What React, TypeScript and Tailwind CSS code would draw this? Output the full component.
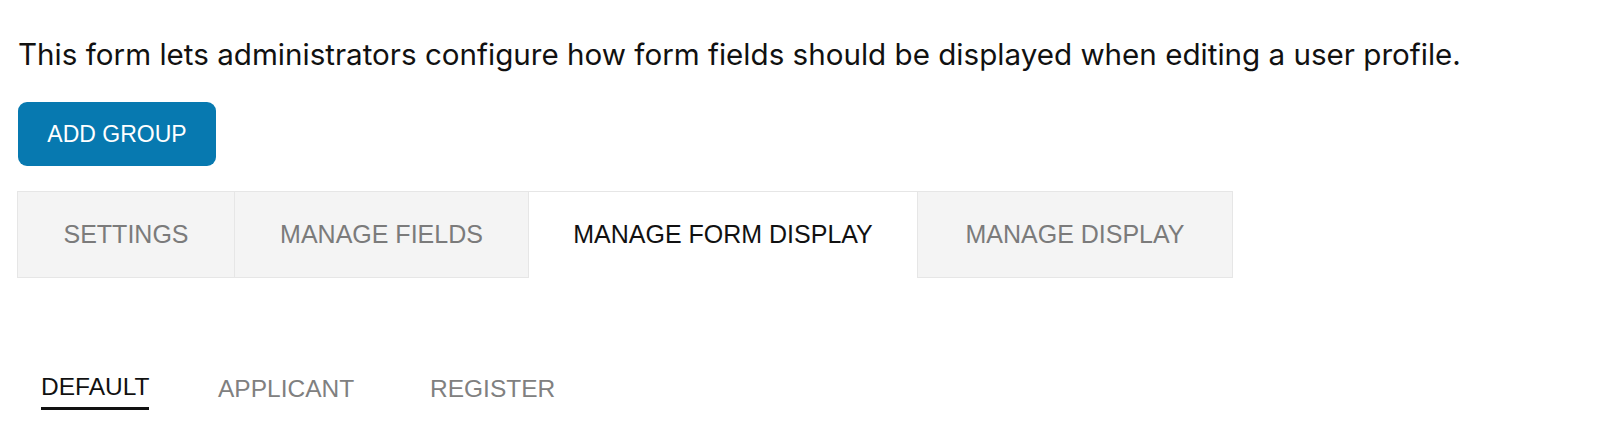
import React from "react";

const tabs = [
  { label: "SETTINGS", w: "w-[218px]", active: false },
  { label: "MANAGE FIELDS", w: "w-[294px]", active: false },
  { label: "MANAGE FORM DISPLAY", w: "w-[389px]", active: true },
  { label: "MANAGE DISPLAY", w: "w-[315px]", active: false },
];

export default function App() {
  return (
    <div
      className="w-[1600px] h-[448px] bg-white pl-[18px] pt-[38px]"
      style={{ fontFamily: '"Liberation Sans", Arial, sans-serif' }}
    >
      <p
        className="text-[29.6px] leading-[33px] text-[#111111] m-0"
        style={{ fontFamily: 'Inter, "Liberation Sans", sans-serif' }}
      >
        This form lets administrators configure how form fields should be displayed when editing a user profile.
      </p>
      <button className="mt-[31px] w-[198px] h-[64px] rounded-[9px] bg-[#0779b0] text-white text-[23px] flex items-center justify-center">
        ADD GROUP
      </button>
      <div className="mt-[25px] flex ml-[-1px] w-[1216px]">
        {tabs.map((t, i) => (
          <div
            key={t.label}
            className={
              "h-[87px] flex items-center justify-center text-[25px] border-t border-[#e6e6e6] " +
              t.w +
              " " +
              (t.active
                ? "bg-white text-[#111111] border-b-0"
                : "bg-[#f4f4f4] text-[#7b7b7b] border-b") +
              " " +
              (i === 0 ? "border-l border-r" : "border-r")
            }
          >
            {t.label}
          </div>
        ))}
      </div>
      <div className="mt-[91px] pl-[23px] flex items-start text-[24.5px]">
        <div className="w-[177px]">
          <div className="inline-flex flex-col">
            <span className="leading-[28px] text-[#111111]">DEFAULT</span>
            <span className="mt-[6px] h-[3px] bg-[#111111]" />
          </div>
        </div>
        <div className="w-[212px] pt-[2px]">
          <span className="leading-[28px] text-[#808080]">APPLICANT</span>
        </div>
        <div className="pt-[2px]">
          <span className="leading-[28px] text-[#808080]">REGISTER</span>
        </div>
      </div>
    </div>
  );
}
